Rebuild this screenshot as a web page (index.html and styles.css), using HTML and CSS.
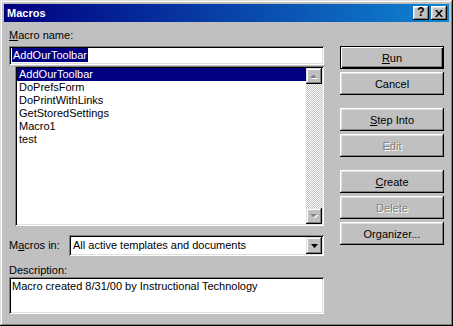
FILE: index.html
```html
<!DOCTYPE html>
<html>
<head>
<meta charset="utf-8">
<title>Macros</title>
<link rel="stylesheet" href="styles.css">
</head>
<body>
<div class="window">
  <div class="titlebar">
    <span class="title">Macros</span>
    <div class="tb-buttons">
      <span class="tbtn help">?</span>
      <span class="tbtn close"><svg width="8" height="7" viewBox="0 0 8 7"><path d="M0 0h2l2 2.5L6 0h2L5 3.5 8 7H6L4 4.5 2 7H0l3-3.5z" fill="#000"/></svg></span>
    </div>
  </div>
  <div class="content">
    <div class="left">
      <div class="lbl name-lbl"><u>M</u>acro name:</div>
      <div class="field name-field"><span class="sel">AddOurToolbar</span></div>
      <div class="listbox">
        <ul class="items">
          <li class="selected">AddOurToolbar</li>
          <li>DoPrefsForm</li>
          <li>DoPrintWithLinks</li>
          <li>GetStoredSettings</li>
          <li>Macro1</li>
          <li>test</li>
        </ul>
        <div class="scrollbar">
          <div class="sb-btn"><svg width="8" height="5" viewBox="0 0 8 5"><path d="M1 5h7L4.5 1.5z" fill="#fff"/><path d="M0 4h7L3.5 0.5z" fill="#808080"/></svg></div>
          <div class="sb-track"></div>
          <div class="sb-btn"><svg width="8" height="5" viewBox="0 0 8 5"><path d="M1 1h7L4.5 4.5z" fill="#fff"/><path d="M0 0h7L3.5 3.5z" fill="#808080"/></svg></div>
        </div>
      </div>
      <div class="macros-in">
        <span class="lbl">M<u>a</u>cros in:</span>
        <div class="combo">
          <span class="combo-text">All active templates and documents</span>
          <span class="combo-btn"><svg width="7" height="4" viewBox="0 0 7 4"><path d="M0 0h7L3.5 4z" fill="#000"/></svg></span>
        </div>
      </div>
      <div class="lbl desc-lbl">Description:</div>
      <div class="field desc">Macro created 8/31/00 by Instructional Technology</div>
    </div>
    <div class="right">
      <div class="group">
        <button class="btn default"><u>R</u>un</button>
        <button class="btn">Cancel</button>
      </div>
      <div class="group">
        <button class="btn"><u>S</u>tep Into</button>
        <button class="btn disabled">Edit</button>
      </div>
      <div class="group">
        <button class="btn"><u>C</u>reate</button>
        <button class="btn disabled">Delete</button>
        <button class="btn">Or<u>g</u>anizer...</button>
      </div>
    </div>
  </div>
</div>
</body>
</html>
```

FILE: styles.css
```css
html, body {
  margin: 0;
  padding: 0;
  background: #c0c0c0;
}
body {
  font-family: "Liberation Sans", Arial, sans-serif;
  font-size: 11px;
  line-height: 13px;
  color: #000;
}
.window {
  box-sizing: border-box;
  width: 453px;
  height: 326px;
  padding: 4px;
  background: #c0c0c0;
  box-shadow: inset -1px -1px #000, inset 1px 1px #dfdfdf, inset -2px -2px #808080, inset 2px 2px #fff;
  display: flex;
  flex-direction: column;
}
.titlebar {
  height: 18px;
  background: linear-gradient(to right, #000080, #1084d0);
  display: flex;
  align-items: center;
  justify-content: space-between;
  padding: 0 2px 0 3px;
}
.title {
  color: #fff;
  font-weight: bold;
  font-size: 11px;
}
.tb-buttons {
  display: flex;
  gap: 2px;
}
.tbtn {
  box-sizing: border-box;
  width: 16px;
  height: 14px;
  background: #c0c0c0;
  box-shadow: inset -1px -1px #000, inset 1px 1px #fff, inset -2px -2px #808080, inset 2px 2px #dfdfdf;
  display: flex;
  align-items: center;
  justify-content: center;
}
.help {
  font-weight: bold;
  font-size: 12px;
  padding-bottom: 1px;
}
.close svg {
  display: block;
  margin-left: -1px;
}
.content {
  display: flex;
  justify-content: space-between;
  padding: 0 5px 0 5px;
  flex: 1;
}
.left {
  width: 315px;
  display: flex;
  flex-direction: column;
}
.lbl {
  white-space: nowrap;
}
.name-lbl {
  margin-top: 7px;
}
.field {
  box-sizing: border-box;
  background: #fff;
  box-shadow: inset 1px 1px #808080, inset -1px -1px #fff, inset 2px 2px #000, inset -2px -2px #dfdfdf;
}
.name-field {
  margin-top: 4px;
  height: 19px;
  padding: 2px 3px;
}
.sel {
  display: inline-block;
  background: #000080;
  color: #fff;
  padding: 0 1px;
  line-height: 14px;
}
.listbox {
  box-sizing: border-box;
  margin: 1px 0 0 6px;
  height: 160px;
  background: #fff;
  padding: 2px;
  display: flex;
  box-shadow: inset 1px 1px #808080, inset -1px -1px #fff, inset 2px 2px #000, inset -2px -2px #dfdfdf;
}
.items {
  list-style: none;
  margin: 0;
  padding: 0;
  flex: 1;
}
.items li {
  height: 13px;
  line-height: 13px;
  padding-left: 2px;
}
.items li.selected {
  background: #000080;
  color: #fff;
}
.scrollbar {
  width: 16px;
  display: flex;
  flex-direction: column;
}
.sb-btn {
  box-sizing: border-box;
  height: 16px;
  background: #c0c0c0;
  box-shadow: inset -1px -1px #000, inset 1px 1px #dfdfdf, inset -2px -2px #808080, inset 2px 2px #fff;
  display: flex;
  align-items: center;
  justify-content: center;
}
.sb-track {
  flex: 1;
  background: repeating-conic-gradient(#c0c0c0 0 25%, #fff 0 50%) 0 0 / 2px 2px;
}
.macros-in {
  margin-top: 9px;
  display: flex;
  align-items: center;
  justify-content: space-between;
}
.combo {
  box-sizing: border-box;
  width: 255px;
  height: 21px;
  background: #fff;
  padding: 2px;
  display: flex;
  align-items: center;
  box-shadow: inset 1px 1px #808080, inset -1px -1px #fff, inset 2px 2px #000, inset -2px -2px #dfdfdf;
}
.combo-text {
  flex: 1;
  padding-left: 2px;
}
.combo-btn {
  box-sizing: border-box;
  width: 16px;
  height: 17px;
  background: #c0c0c0;
  box-shadow: inset -1px -1px #000, inset 1px 1px #dfdfdf, inset -2px -2px #808080, inset 2px 2px #fff;
  display: flex;
  align-items: center;
  justify-content: center;
}
.desc-lbl {
  margin-top: 8px;
}
.desc {
  height: 37px;
  padding: 3px 3px;
}
.right {
  width: 104px;
  padding-top: 24px;
  display: flex;
  flex-direction: column;
  gap: 13px;
}
.group {
  display: flex;
  flex-direction: column;
  gap: 3px;
}
.btn {
  box-sizing: border-box;
  width: 104px;
  height: 23px;
  border: none;
  margin: 0;
  padding: 0;
  background: #c0c0c0;
  font-family: "Liberation Sans", Arial, sans-serif;
  font-size: 11px;
  font-weight: normal;
  color: #000;
  box-shadow: inset -1px -1px #000, inset 1px 1px #fff, inset -2px -2px #808080, inset 2px 2px #dfdfdf;
}
.btn.default {
  box-shadow: inset 1px 1px #000, inset -1px -1px #000, inset 2px 2px #fff, inset -2px -2px #000, inset -3px -3px #808080;
}
.btn.disabled {
  color: #808080;
  text-shadow: 1px 1px #fff;
}
```
